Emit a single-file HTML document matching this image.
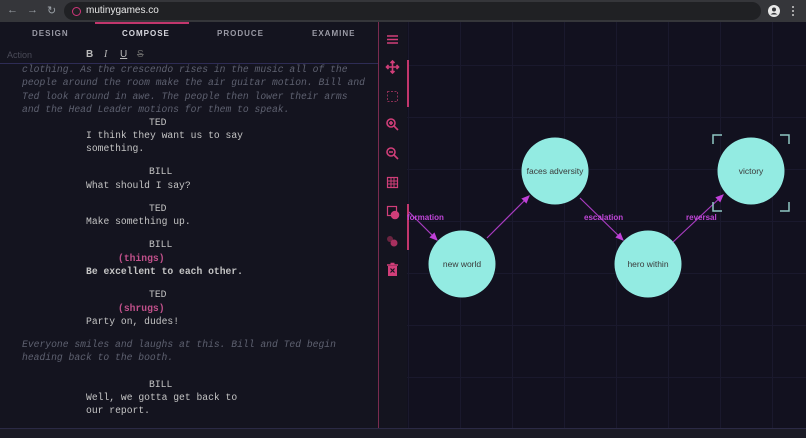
<!DOCTYPE html>
<html><head><meta charset="utf-8"><style>
*{margin:0;padding:0;box-sizing:border-box}
body{width:806px;height:438px;overflow:hidden;background:#13131f;font-family:"Liberation Sans",sans-serif;position:relative}
.bar{position:absolute;left:0;top:0;width:806px;height:22px;background:#35363a}
.url{position:absolute;left:64px;top:2px;width:697px;height:18px;border-radius:9px;background:#202124;color:#e8e8e8;font-size:10px;line-height:18px;padding-left:22px}
.url i{position:absolute;left:8px;top:5px;width:9px;height:9px;border:1.5px solid #d0357a;border-radius:50%}
.nav{position:absolute;top:4px;color:#9aa0a6;font-size:11px}
.left{position:absolute;left:0;top:22px;width:378px;height:406px;background:#14141f}
.tab{position:absolute;top:7px;font-size:8px;font-weight:bold;letter-spacing:1px;color:#9a9aa5}
.uline{position:absolute;left:95px;top:0;width:94px;height:2px;background:#c2366d}
.tb{position:absolute;top:26px;left:0;width:378px;height:16px;border-bottom:1px solid #2e2c55}
.sc{position:absolute;font-family:"Liberation Mono",monospace;font-size:9.7px;line-height:13.3px;color:#c4c4c4;white-space:pre}
.act{color:#5e6170;font-style:italic}
.par{color:#c0508a;font-weight:bold}
.b{font-weight:bold}
.div{position:absolute;left:378px;top:22px;width:1px;height:406px;background:#7a2b4f}
.tools{position:absolute;left:379px;top:22px;width:28px;height:406px;background:#14141f}
.canvas{position:absolute;left:407px;top:22px;width:399px;height:406px;background-color:#12111f;
background-image:linear-gradient(90deg,#1a192d 1px,transparent 1px),linear-gradient(#1a192d 1px,transparent 1px);background-size:52px 52px;background-position:1px 43px}
.bottom{position:absolute;left:0;top:428px;width:806px;height:10px;background:#1b1b26;border-top:1px solid #2b2a45}
</style></head><body>
<div class="bar">
<span class="nav" style="left:7px">&#8592;</span><span class="nav" style="left:27px">&#8594;</span><span class="nav" style="left:47px">&#8635;</span>
<div class="url"><i></i>mutinygames.co</div>
<svg style="position:absolute;left:768px;top:5px" width="12" height="12"><circle cx="6" cy="6" r="6" fill="#e8e8e8"/><circle cx="6" cy="4.5" r="2" fill="#35363a"/><path d="M2.5 9.5 Q6 6 9.5 9.5" fill="#35363a"/></svg>
<svg style="position:absolute;left:791px;top:5px" width="4" height="12"><circle cx="2" cy="2" r="1" fill="#ccc"/><circle cx="2" cy="6" r="1" fill="#ccc"/><circle cx="2" cy="10" r="1" fill="#ccc"/></svg>
</div>
<div class="left">
<div class="uline"></div>
<span class="tab" style="left:32px">DESIGN</span>
<span class="tab" style="left:122px;color:#d8d8df">COMPOSE</span>
<span class="tab" style="left:217px">PRODUCE</span>
<span class="tab" style="left:312px">EXAMINE</span>
<div class="tb"><span style="position:absolute;left:7px;top:2px;font-size:9px;color:#4a4b58">Action</span>
<span style="position:absolute;left:86px;top:1px;font-size:10px;color:#bbb;font-weight:bold">B</span>
<span style="position:absolute;left:104px;top:1px;font-size:10px;color:#bbb;font-style:italic;font-family:'Liberation Serif',serif">I</span>
<span style="position:absolute;left:120px;top:1px;font-size:10px;color:#bbb;text-decoration:underline">U</span>
<span style="position:absolute;left:137px;top:1px;font-size:10px;color:#666;text-decoration:line-through">S</span></div>
</div>
<div class="sc act" style="left:22px;top:63px">clothing. As the crescendo rises in the music all of the
people around the room make the air guitar motion. Bill and
Ted look around in awe. The people then lower their arms
and the Head Leader motions for them to speak.</div>
<div class="sc" style="left:149px;top:116px">TED</div>
<div class="sc" style="left:86px;top:129px">I think they want us to say
something.</div>
<div class="sc" style="left:149px;top:165px">BILL</div>
<div class="sc" style="left:86px;top:179px">What should I say?</div>
<div class="sc" style="left:149px;top:202px">TED</div>
<div class="sc" style="left:86px;top:215px">Make something up.</div>
<div class="sc" style="left:149px;top:238px">BILL</div>
<div class="sc par" style="left:118px;top:252px">(things)</div>
<div class="sc b" style="left:86px;top:265px">Be excellent to each other.</div>
<div class="sc" style="left:149px;top:288px">TED</div>
<div class="sc par" style="left:118px;top:302px">(shrugs)</div>
<div class="sc" style="left:86px;top:315px">Party on, dudes!</div>
<div class="sc act" style="left:22px;top:338px">Everyone smiles and laughs at this. Bill and Ted begin
heading back to the booth.</div>
<div class="sc" style="left:149px;top:378px">BILL</div>
<div class="sc" style="left:86px;top:391px">Well, we gotta get back to
our report.</div>
<div class="div"></div>
<div class="tools">
<svg width="28" height="406" fill="none" stroke="#d13e79" stroke-width="1.6">
<path d="M8 14h11M8 17.5h11M8 21h11"/>
<path d="M13.5 39v12M7.5 45h12M11.5 41l2-2 2 2M11.5 49l2 2 2-2M9.5 43l-2 2 2 2M17.5 43l2 2-2 2"/>
<rect x="8.5" y="69.5" width="10" height="10" stroke-dasharray="2 1.5" stroke-width="1" stroke="#8a2f55"/>
<circle cx="12" cy="101" r="4"/><path d="M15 104l4 4M10 101h4M12 99v4"/>
<circle cx="12" cy="130" r="4"/><path d="M15 133l4 4M10 130h4"/>
<rect x="8.5" y="155.5" width="10" height="10" stroke-width="1.2"/><path d="M8.5 159h10M8.5 162h10M12 155.5v10M15 155.5v10" stroke-width="1"/>
<rect x="8.5" y="184.5" width="9" height="9" stroke-width="1.2"/><circle cx="16" cy="193" r="3.5" fill="#d13e79"/>
<circle cx="11" cy="217" r="3" fill="#6a2440" stroke="none"/><circle cx="15" cy="221" r="3.5" fill="#a8305f" stroke="none"/>
<path d="M8 243h11M11.5 241.5h4" /><rect x="9" y="244" width="9" height="10" fill="#d13e79" stroke="none"/><path d="M11.5 246.5l4 4M15.5 246.5l-4 4" stroke="#14141f" stroke-width="1.2"/>
</svg>
</div>
<div class="canvas">
<svg width="399" height="406" style="position:absolute;left:0;top:0">
<defs><marker id="a" markerWidth="8" markerHeight="8" refX="6" refY="3" orient="auto"><path d="M0 0L7 3L0 6z" fill="#c040d8"/></marker></defs>
<line x1="1" y1="38" x2="1" y2="85" stroke="#c2366d" stroke-width="2"/>
<line x1="1" y1="182" x2="1" y2="228" stroke="#c2366d" stroke-width="2"/>
<g stroke="#a83cc0" stroke-width="1.2" marker-end="url(#a)">
<line x1="2" y1="190" x2="30" y2="218"/>
<line x1="80" y1="216" x2="122" y2="174"/>
<line x1="173" y1="176" x2="216" y2="218"/>
<line x1="266" y1="220" x2="316" y2="173"/>
</g>
<g fill="#93ebe2"><circle cx="55" cy="242" r="33.5"/><circle cx="148" cy="149" r="33.5"/><circle cx="241" cy="242" r="33.5"/><circle cx="344" cy="149" r="33.5"/></g>
<g font-family="Liberation Sans" font-size="8.5" fill="#3a3a3a" text-anchor="middle">
<text x="55" y="245">new world</text><text x="148" y="152">faces adversity</text><text x="241" y="245">hero within</text><text x="344" y="152">victory</text></g>
<g font-family="Liberation Sans" font-size="8" font-weight="bold" fill="#c046d8">
<text x="0" y="198">formation</text><text x="177" y="198">escalation</text><text x="279" y="198">reversal</text></g>
<g stroke="#8fc8c4" stroke-width="1.5" fill="none"><path d="M306 122v-9h9M373 113h9v9M306 180v9h9M373 189h9v-9"/></g>
</svg>
</div>
<div class="bottom"></div>
</body></html>
